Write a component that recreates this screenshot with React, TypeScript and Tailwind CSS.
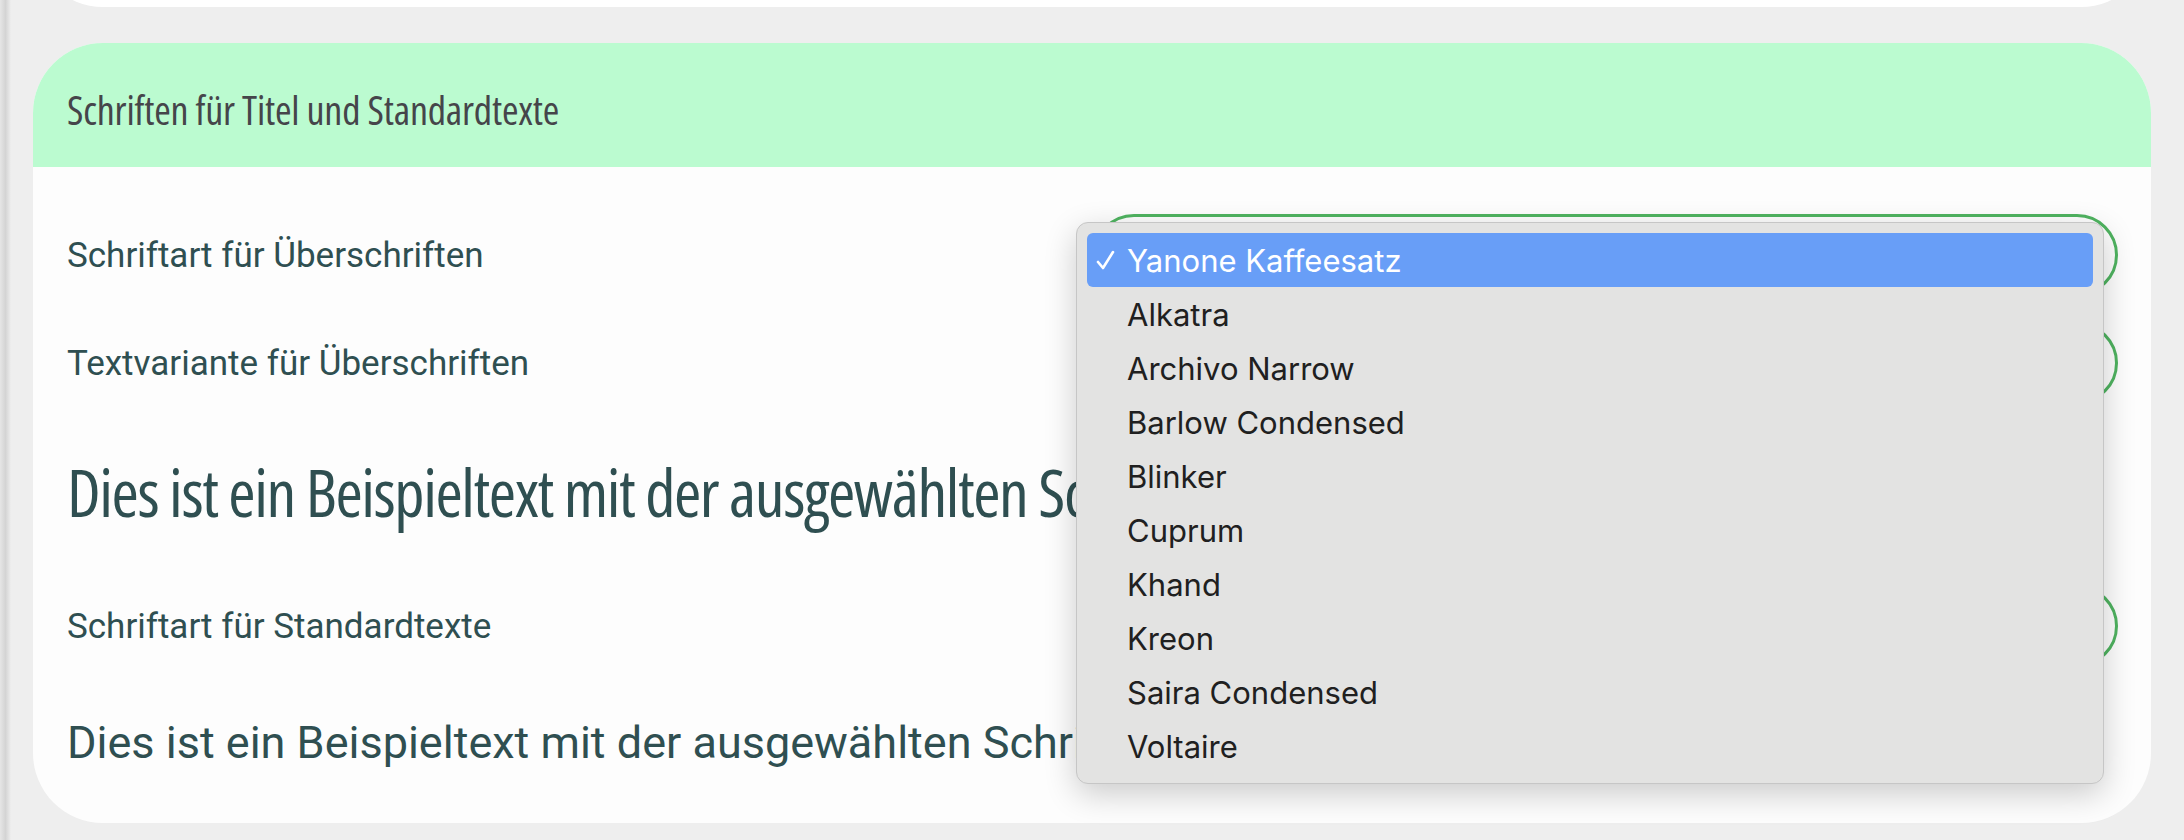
const FONTS = [
  "Yanone Kaffeesatz",
  "Alkatra",
  "Archivo Narrow",
  "Barlow Condensed",
  "Blinker",
  "Cuprum",
  "Khand",
  "Kreon",
  "Saira Condensed",
  "Voltaire",
];

function SelectRow({ label }: { label: string }) {
  return (
    <div className="flex h-[82px] items-center">
      <span className="w-1/2 shrink-0 font-['Roboto',sans-serif] text-[35px] leading-none text-[#2f4f51]">
        {label}
      </span>
      <div className="h-[82px] flex-1 rounded-full border-[3px] border-[#4fb360] bg-[#fdfdfd]" />
    </div>
  );
}

function Tick() {
  return (
    <svg width="19" height="20" viewBox="0 0 19 20" fill="none" className="block">
      <path d="M2 12 L7 18 L17 2" stroke="currentColor" strokeWidth="2.6" strokeLinecap="round" strokeLinejoin="round" />
    </svg>
  );
}

function FontMenu() {
  return (
    <div className="absolute left-[1043px] top-[179px] w-[1028px] rounded-[12px] border border-[#c6c6c6] bg-[#e3e3e2] p-[10px] shadow-[0_10px_32px_rgba(0,0,0,0.2)]">
      {FONTS.map((f, i) => (
        <div
          key={f}
          className={
            i === 0
              ? "flex h-[54px] items-center rounded-[6px] bg-[#689ef7] font-['Inter',sans-serif] text-[31px] text-white"
              : "flex h-[54px] items-center rounded-[6px] font-['Inter',sans-serif] text-[31px] text-[#202020]"
          }
        >
          <span className="flex w-[40px] shrink-0 items-center justify-start pl-[9px]">
            {i === 0 && <Tick />}
          </span>
          <span className="leading-none">{f}</span>
        </div>
      ))}
    </div>
  );
}

export default function App() {
  return (
    <div className="flex h-[840px] w-full overflow-hidden bg-[#eeeeee]">
      <div className="w-[11px] shrink-0 bg-gradient-to-r from-[#e6e6e6] via-[#d4d4d4] to-[#eeeeee]" />
      <main className="flex-1 pl-[22px] pr-[33px]">
        <div className="-mt-[200px] h-[207px] rounded-[70px] bg-white" />

        <section className="relative mt-[36px] rounded-[70px] bg-[#fdfdfd]">
          <header className="flex h-[124px] items-center rounded-t-[70px] bg-[#bbfbd0] px-[34px] pt-[9px]">
            <h2 className="font-['Open_Sans',sans-serif] text-[40px] font-medium leading-none tracking-[-0.2px] text-[#45454a] [font-stretch:75%]">
              Schriften für Titel und Standardtexte
            </h2>
          </header>

          <div className="overflow-hidden rounded-b-[70px] pl-[34px] pr-[33px] pt-[47px]">
            <SelectRow label="Schriftart für Überschriften" />
            <div className="mt-[26px]">
              <SelectRow label="Textvariante für Überschriften" />
            </div>

            <div className="flex h-[181px] items-center pb-[8px]">
              <p className="whitespace-nowrap font-['Open_Sans',sans-serif] text-[66px] leading-none tracking-[-1.4px] text-[#2f4f51] [font-stretch:75%]">
                Dies ist ein Beispieltext mit der ausgewählten Schriftart.
              </p>
            </div>

            <SelectRow label="Schriftart für Standardtexte" />

            <div className="flex h-[156px] items-center pb-[6px]">
              <p className="whitespace-nowrap font-['Roboto',sans-serif] text-[45px] leading-none text-[#2f4f51]">
                Dies ist ein Beispieltext mit der ausgewählten Schriftart.
              </p>
            </div>
          </div>

          <FontMenu />
        </section>
      </main>
    </div>
  );
}
